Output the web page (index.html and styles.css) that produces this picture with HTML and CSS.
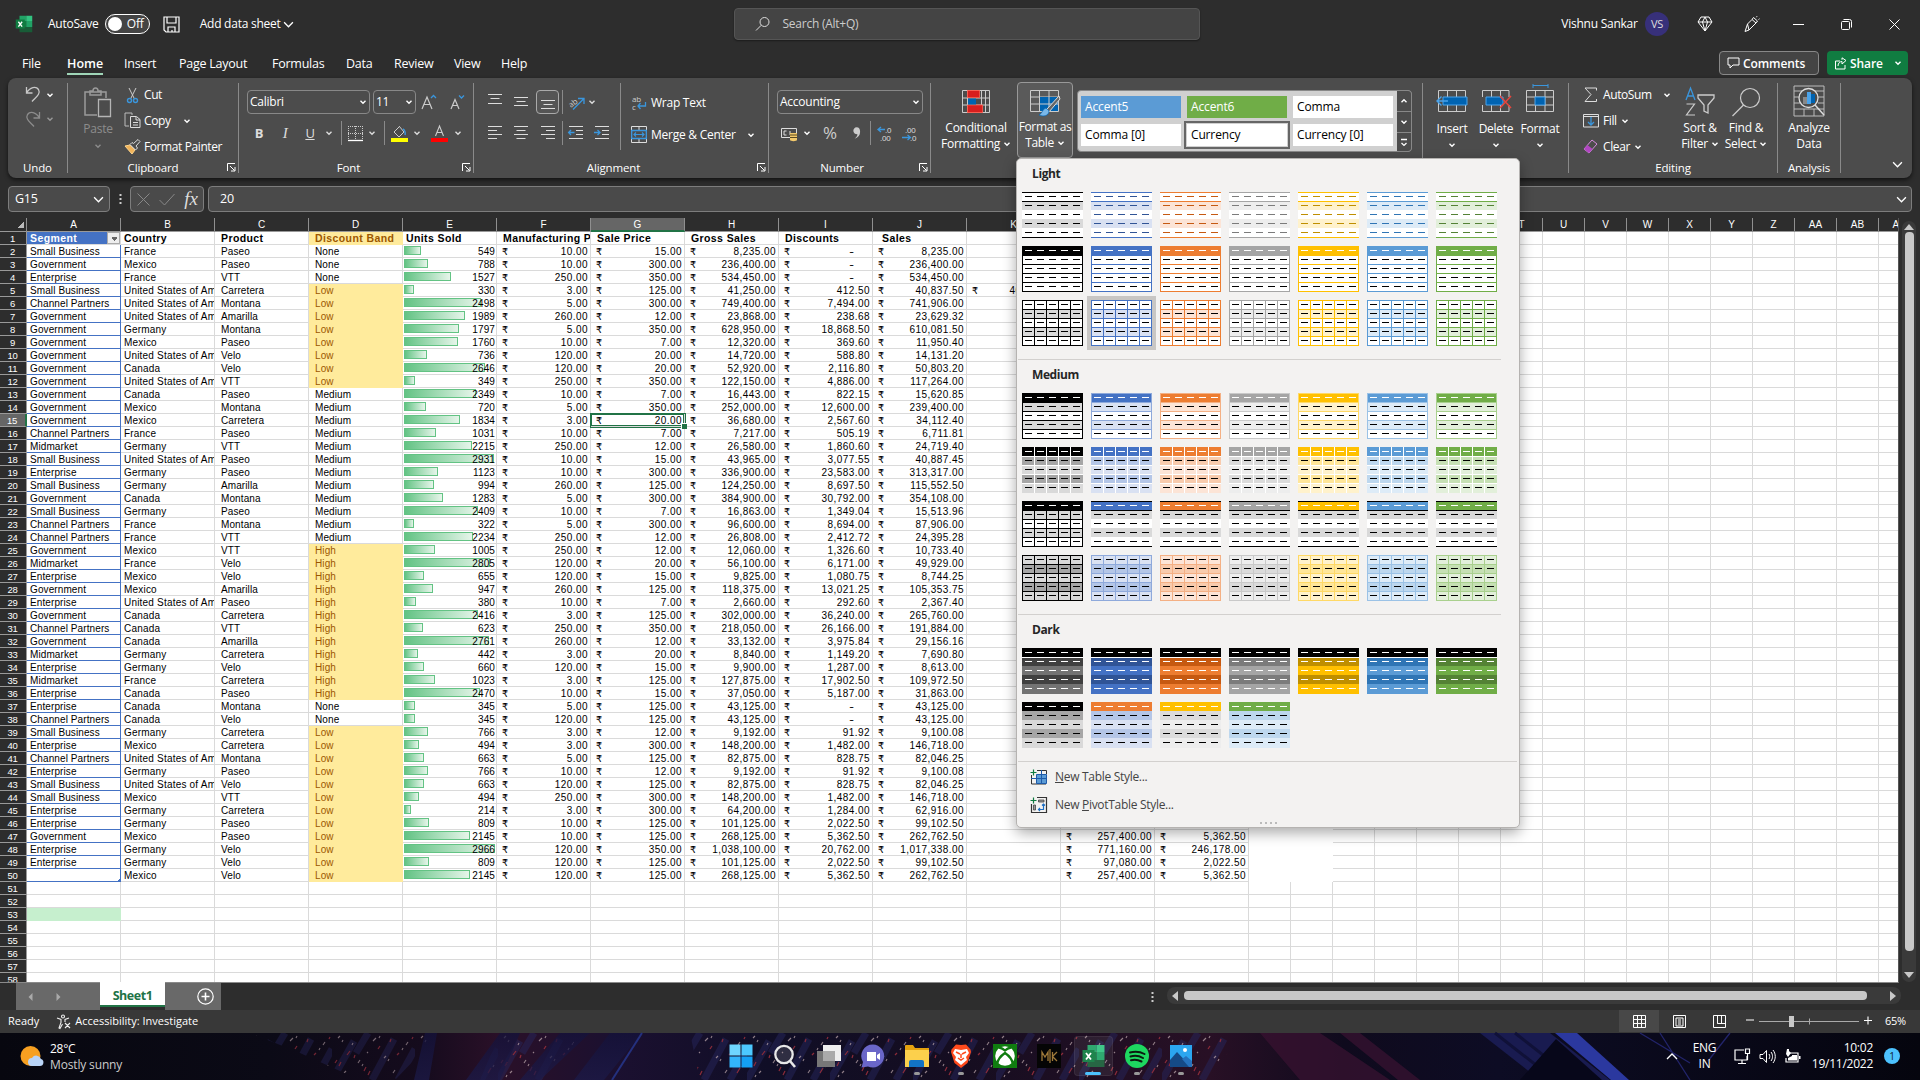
FILE: index.html
```html
<!DOCTYPE html>
<html lang="en">
<head>
<meta charset="utf-8">
<title>Add data sheet - Excel</title>
<link rel="stylesheet" href="styles.css">
</head>
<body>
<svg class="defs" width="0" height="0" aria-hidden="true">
  <symbol id="chev" viewBox="0 0 8 8"><path d="M1.5 2.8 4 5.2 6.5 2.8" fill="none" stroke="currentColor" stroke-width="1.4"/></symbol>
  <symbol id="chevl" viewBox="0 0 10 10"><path d="M1 3 5 7 9 3" fill="none" stroke="currentColor" stroke-width="1.2"/></symbol>
  <symbol id="launch" viewBox="0 0 9 9"><path d="M.5 8V.5H8M3 3l4.5 4.5M8 4v4H4" fill="none" stroke="currentColor"/></symbol>
  <symbol id="excel" viewBox="0 0 24 24"><path d="M6 1h9v7H6z" fill="#21a366"/><path d="M15 1h8v7h-8z" fill="#33c481"/><path d="M6 8h9v8H6z" fill="#107c41"/><path d="M15 8h8v8h-8z" fill="#21a366"/><path d="M6 16h17v7H6z" fill="#185c37"/><path d="M1 6h12v12H1z" fill="#107c41"/><path d="m4.500 9 5 6.500M9.500 9l-5 6.500" stroke="#fff" stroke-width="1.800" fill="none"/></symbol>
  <symbol id="lines-l" viewBox="0 0 16 16"><path d="M1 1.500h14M1 5.500h9M1 9.500h14M1 13.500h9" stroke="currentColor"/></symbol>
  <symbol id="lines-c" viewBox="0 0 16 16"><path d="M1 1.500h14M3.500 5.500h9M1 9.500h14M3.500 13.500h9" stroke="currentColor"/></symbol>
  <symbol id="lines-r" viewBox="0 0 16 16"><path d="M1 1.500h14M6 5.500h9M1 9.500h14M6 13.500h9" stroke="currentColor"/></symbol>
  <symbol id="v3" viewBox="0 0 16 16"><path d="M1 3.500h14M3.500 7.500h9M1 11.500h14" stroke="currentColor"/></symbol>
</svg>

<header class="titlebar">
  <svg class="app-icon" width="18" height="18"><use href="#excel"/></svg>
  <span class="autosave">AutoSave</span>
  <span class="toggle"><i></i>Off</span>
  <svg class="save" width="17" height="17" viewBox="0 0 17 17"><path d="M1 1h15v15H3L1 14zM4 1v6h9V1M5 16v-5h7v5M9 16v-2" fill="none" stroke="#fff" stroke-width="1.200"/></svg>
  <span class="doc">Add data sheet</span>
  <svg class="doc-chev" width="11" height="11"><use href="#chevl"/></svg>
  <div class="search">
    <svg width="16" height="16" viewBox="0 0 16 16"><circle cx="9.500" cy="6" r="4.500" fill="none" stroke="#ddd"/><path d="M6.300 9.200 1 14.500" stroke="#ddd"/></svg>
    <span>Search (Alt+Q)</span>
  </div>
  <span class="user">Vishnu Sankar</span>
  <span class="avatar">VS</span>
  <div class="window-tools">
    <svg width="16" height="16" viewBox="0 0 16 16"><path d="M4 1h8l3 5-7 9-7-9zM1 6h14M5.500 6 8 1l2.500 5L8 15z" fill="none" stroke="#fff"/></svg>
    <svg width="17" height="17" viewBox="0 0 17 17"><path d="M2 15.500 4.500 8 9 3.500l4 3.500L6 14zM9 3.500l1.500-2 4 3.500L13 7M13.500 1.200l.5-1M15.500 3.500l1-.7M4.500 8l1.500 6" fill="none" stroke="#fff"/></svg>
    <svg width="11" height="11" viewBox="0 0 11 11"><path d="M0 5.500h11" stroke="#fff"/></svg>
    <svg width="11" height="11" viewBox="0 0 11 11"><rect x=".5" y="2.500" width="8" height="8" rx="1" fill="none" stroke="#fff"/><path d="M2.500.5h6a2 2 0 0 1 2 2v6" fill="none" stroke="#fff"/></svg>
    <svg width="11" height="11" viewBox="0 0 11 11"><path d="m.5.500 10 10M10.500.500l-10 10" stroke="#fff"/></svg>
  </div>
</header>

<nav class="tabs">
  <a>File</a><a class="active">Home</a><a>Insert</a><a>Page Layout</a><a>Formulas</a><a>Data</a><a>Review</a><a>View</a><a>Help</a>
  <div class="tab-actions">
    <button class="comments"><svg width="13" height="12" viewBox="0 0 13 12"><path d="M1 1h11v7H6l-3 3V8H1z" fill="none" stroke="#fff"/></svg>Comments</button>
    <button class="share"><svg width="13" height="13" viewBox="0 0 13 13"><path d="M6 4H1.500v8H11V8M4 9c0-3 2-4.500 4-4.500V7l4-3.500L8 .8v2" fill="none" stroke="#fff"/></svg>Share<svg class="share-chev" width="8" height="8"><use href="#chev"/></svg></button>
  </div>
</nav>

<section class="ribbon">
  <div class="group g-undo">
    <div class="tools undo-grid">
      <svg width="16" height="17" viewBox="0 0 16 17"><path d="M1.500 1v6h6M1.500 7C5 1 11 0 13.500 3.500 16 8 11 11 7 15.500" fill="none" stroke="#c8c8c8" stroke-width="1.300"/></svg>
      <svg width="8" height="8"><use href="#chev"/></svg>
      <svg width="16" height="17" viewBox="0 0 16 17"><path d="M14.500 1v6h-6M14.500 7C11 1 5 0 2.500 3.500 0 8 5 11 9 15.500" fill="none" stroke="#8c8c8c" stroke-width="1.300"/></svg>
      <svg class="dim" width="8" height="8"><use href="#chev"/></svg>
    </div>
    <div class="glabel">Undo</div>
  </div>
  <div class="group g-clip">
    <div class="tools clip-grid">
      <div class="paste">
        <svg width="28" height="31" viewBox="0 0 28 31"><path d="M13 28H1V5h21v6M6 8V4h3c0-4 5-4 5 0h3v4z" fill="none" stroke="#9a9a9a" stroke-width="1.500"/><path d="M14.500 12.500h12v17h-12z" fill="#4c4c4c" stroke="#b5b5b5" stroke-width="1.300"/></svg>
        <span>Paste</span>
        <svg width="8" height="8"><use href="#chev"/></svg>
      </div>
      <div class="clip-list">
        <div><svg width="17" height="17" viewBox="0 0 17 17"><path d="m5 1 5.500 11M12 1 6.500 12" stroke="#ccc" fill="none"/><circle cx="5.500" cy="13.500" r="2" fill="none" stroke="#3a96dd" stroke-width="1.400"/><circle cx="11.500" cy="13.500" r="2" fill="none" stroke="#3a96dd" stroke-width="1.400"/></svg>Cut</div>
        <div><svg width="17" height="17" viewBox="0 0 17 17"><path d="M5 14H1V1h7v2" fill="none" stroke="#bbb"/><path d="M6.500 4.500h6l3.500 3v8H6.500zM12 5v3h4M9 10.500h5M9 13h5" fill="none" stroke="#ddd"/></svg>Copy<svg class="copy-chev" width="8" height="8"><use href="#chev"/></svg></div>
        <div><svg width="17" height="17" viewBox="0 0 17 17"><path d="m1 8 5-1 5 5-3 4z" fill="#f0b35a" stroke="#ffd58a"/><path d="M6 6.500 11.500 12l2-2-1.500-2 4-4.500-2-2L9.500 5.500 8 4.500z" fill="#4c4c4c" stroke="#ddd"/></svg>Format Painter</div>
      </div>
    </div>
    <div class="glabel">Clipboard<svg width="9" height="9"><use href="#launch"/></svg></div>
  </div>
  <div class="group g-font">
    <div class="tools">
      <div class="font-r1">
        <span class="combo">Calibri<svg width="8" height="8"><use href="#chev"/></svg></span>
        <span class="combo">11<svg width="8" height="8"><use href="#chev"/></svg></span>
        <svg width="16" height="16" viewBox="0 0 16 16"><path d="M1 15 6 3l5 12M3 10.500h6" fill="none" stroke="#ccc" stroke-width="1.200"/><path d="m10 4 2.500-2.500L15 4" fill="none" stroke="#3a96dd" stroke-width="1.300"/></svg>
        <svg width="16" height="16" viewBox="0 0 16 16"><path d="M2 15 6 5.500 10 15M3.600 11.500h5" fill="none" stroke="#ccc" stroke-width="1.200"/><path d="m10 1.500 2.500 2.500L15 1.500" fill="none" stroke="#3a96dd" stroke-width="1.300"/></svg>
      </div>
      <div class="font-r2">
        <b>B</b><i>I</i><u>U</u><svg width="8" height="8"><use href="#chev"/></svg><s class="sep"></s>
        <svg width="17" height="17" viewBox="0 0 17 17"><path d="M1 1.500h15M1 8.500h15M1.500 1v14M8.500 1v14M15.500 1v14" stroke="#ccc" stroke-dasharray="1 1"/><path d="M1 15.500h15" stroke="#fff" stroke-width="1.300"/></svg>
        <svg width="8" height="8"><use href="#chev"/></svg><s class="sep"></s>
        <svg width="17" height="17" viewBox="0 0 17 17"><path d="m8 1 5 6-5 5-5-5 5-5" fill="none" stroke="#ccc"/><path d="M12 4c2 1 2.500 4 2 6" fill="none" stroke="#3a96dd" stroke-width="1.500"/><path d="M0 13h17v4H0z" fill="#ff0"/></svg>
        <svg width="8" height="8"><use href="#chev"/></svg>
        <svg width="17" height="17" viewBox="0 0 17 17"><path d="M4.500 11 8.500 1l4 10M6 7.500h5" fill="none" stroke="#ccc" stroke-width="1.100"/><path d="M0 13h17v4H0z" fill="red"/></svg>
        <svg width="8" height="8"><use href="#chev"/></svg>
      </div>
    </div>
    <div class="glabel off">Font<svg width="9" height="9"><use href="#launch"/></svg></div>
  </div>
  <div class="group g-align">
    <div class="tools align-grid">
      <div class="align-left">
        <div class="align-r1">
          <svg width="16" height="16" viewBox="0 0 16 16"><path d="M1 .5h14M3.500 4.500h9M1 9.500h14" stroke="currentColor"/></svg>
          <svg width="16" height="16"><use href="#v3"/></svg>
          <span class="pressed"><svg width="16" height="16" viewBox="0 0 16 16"><path d="M1 6.500h14M3.500 10.500h9M1 14.500h14" stroke="currentColor"/></svg></span>
          <s class="sep"></s>
          <svg width="17" height="17" viewBox="0 0 17 17"><text x="0" y="11" class="tiny-ab" transform="rotate(-38 6 8)">ab</text><path d="M5 15.500 15.500 5M10 4.500h6V10" fill="none" stroke="#3a96dd" stroke-width="1.300"/></svg>
          <svg class="near" width="8" height="8"><use href="#chev"/></svg>
        </div>
        <div class="align-r1">
          <svg width="16" height="16"><use href="#lines-l"/></svg>
          <svg width="16" height="16"><use href="#lines-c"/></svg>
          <svg width="16" height="16"><use href="#lines-r"/></svg>
          <s class="sep"></s>
          <svg width="16" height="16" viewBox="0 0 16 16"><path d="M1 1.500h14M8 5.500h7M8 9.500h7M1 13.500h14" stroke="#ddd"/><path d="M6.500 7.500h-6M3 5 .6 7.500 3 10" fill="none" stroke="#3a96dd" stroke-width="1.300"/></svg>
          <svg width="16" height="16" viewBox="0 0 16 16"><path d="M1 1.500h14M8 5.500h7M8 9.500h7M1 13.500h14" stroke="#ddd"/><path d="M0 7.500h6M3.500 5 6 7.500 3.500 10" fill="none" stroke="#3a96dd" stroke-width="1.300"/></svg>
        </div>
      </div>
      <div class="align-right">
        <div><svg width="16" height="17" viewBox="0 0 16 17"><text x="1" y="8" class="tiny-ab">ab</text><text x="1" y="16" class="tiny-ab">c</text><path d="M14.500 8v4H7M9.500 9 7 12l2.500 3" fill="none" stroke="#3a96dd" stroke-width="1.300"/></svg>Wrap Text</div>
        <div><svg width="16" height="17" viewBox="0 0 16 17"><path d="M.5.500h15v16H.5zM8 .5v4M8 12.500v4" fill="none" stroke="#ddd"/><path d="M.7 4.500h14.600v8H.7z" fill="#4c4c4c" stroke="#3a96dd" stroke-width="1.300"/><path d="M3 8.500h10M5 6.500l-2 2 2 2M11 6.500l2 2-2 2" fill="none" stroke="#3a96dd" stroke-width="1.200"/></svg>Merge &amp; Center<svg class="merge-chev" width="8" height="8"><use href="#chev"/></svg></div>
      </div>
    </div>
    <div class="glabel off">Alignment<svg width="9" height="9"><use href="#launch"/></svg></div>
  </div>
  <div class="group g-num">
    <div class="tools">
      <div class="num-r1"><span class="combo">Accounting<svg width="8" height="8"><use href="#chev"/></svg></span></div>
      <div class="num-r2">
        <svg width="17" height="17" viewBox="0 0 17 17"><path d="M.5 3.500h15v9H.5zM5.500 6H3v4h2.500M9 6v4" fill="none" stroke="#ddd"/><path d="M9 8h7v7c0 1.500-7 1.500-7 0z" fill="#f3c96b"/><path d="M9 10h7M9 12.500h7" stroke="#5b4a20"/></svg>
        <svg width="8" height="8"><use href="#chev"/></svg>
        <span class="pct">%</span>
        <svg width="9" height="14" viewBox="0 0 10 15"><path d="M5 1c3 0 4 2 4 5 0 4-2 6-6 8 2-2 3-3 3-5-3 0-4.500-2-4.500-4S3 1 5 1z" fill="#ccc"/></svg>
        <s class="sep"></s>
        <svg width="17" height="17" viewBox="0 0 17 17"><text x="8" y="8" class="dec">.0</text><text x="3" y="16" class="dec">.00</text><path d="M8 4.500H1M4 2 1 4.500 4 7" fill="none" stroke="#3a96dd" stroke-width="1.300"/></svg>
        <svg width="17" height="17" viewBox="0 0 17 17"><text x="3" y="8" class="dec">.00</text><text x="8" y="16" class="dec">.0</text><path d="M0 12.500h8M5.500 10l3 2.500-3 2.500" fill="none" stroke="#3a96dd" stroke-width="1.300"/></svg>
      </div>
    </div>
    <div class="glabel off">Number<svg width="9" height="9"><use href="#launch"/></svg></div>
  </div>
  <div class="group g-style">
    <div class="big cond">
      <svg width="28" height="23" viewBox="0 0 28 23"><path d="M.5.500h27v22H.5zM5.500 0v23M19.500 0v23M23.500 0v23M0 8h28M0 15h28" fill="none" stroke="#ccc"/><path d="M5.500.5h12v7h-12zM5.500 15h15v7.500h-15z" fill="#d81e1e" stroke="#ff5a4a" stroke-width=".8"/><path d="M6 8.500h8v6H6z" fill="#0063b1"/></svg>
      <span>Conditional</span><span>Formatting <svg width="8" height="8"><use href="#chev"/></svg></span>
    </div>
    <div class="big fat">
      <svg width="32" height="28" viewBox="0 0 32 28"><path d="M1.500 1.500h28v21h-28zM10.500 1v22M20 1v22M1 8h29M1 15h29" fill="none" stroke="#ccc"/><path d="M11 8h18v14H11z" fill="#0063b1"/><path d="M20 8v14M11 15h18" stroke="#ccc"/><path d="M30 7 18 20l2 3L31 10z" fill="#666" stroke="#ddd"/><path d="M17 19c-4 1-3 5-7 7 4 2 10 1 10-4z" fill="#7ab8ea" stroke="#0063b1" stroke-width=".7"/></svg>
      <span>Format as</span><span>Table <svg width="8" height="8"><use href="#chev"/></svg></span>
    </div>
    <div class="gallery">
      <div class="cells">
        <span class="c5">Accent5</span><span class="c6">Accent6</span><span>Comma</span>
        <span>Comma [0]</span><span class="picked">Currency</span><span>Currency [0]</span>
      </div>
      <div class="gscroll">
        <i><svg class="flip" width="8" height="8"><use href="#chev"/></svg></i>
        <i><svg width="8" height="8"><use href="#chev"/></svg></i>
        <i><svg width="8" height="10" viewBox="0 0 8 10"><path d="M1 1.500h6M1.500 5 4 7.400 6.500 5" fill="none" stroke="#fff" stroke-width="1.300"/></svg></i>
      </div>
    </div>
  </div>
  <div class="group g-cells">
    <div class="big"><svg width="32" height="24" viewBox="0 0 32 24"><path d="M2.500 1.500h27v21h-27zM11.500 1v22M20.500 1v22" fill="none" stroke="#ccc"/><path d="M7 8h24v8H7z" fill="#0063b1" stroke="#4aa3ea"/><path d="M12 12H1M5.500 7.500 1 12l4.500 4.500" fill="none" stroke="#4aa3ea" stroke-width="1.400"/></svg><span>Insert</span><svg width="8" height="8"><use href="#chev"/></svg></div>
    <div class="big"><svg width="32" height="24" viewBox="0 0 32 24"><path d="M29 8V1.500H2.500V8M2.500 16v6.500H29V16M11.500 1v7M20.500 1v7M11.500 16v6M20.500 16v6" fill="none" stroke="#ccc"/><path d="M6 8h17v8H6z" fill="#0063b1" stroke="#4aa3ea"/><path d="m20 7 11 12M31 7 20 19" stroke="#e8453c" stroke-width="1.500"/></svg><span>Delete</span><svg width="8" height="8"><use href="#chev"/></svg></div>
    <div class="big fmt"><svg width="30" height="29" viewBox="0 0 30 29"><path d="M1.500 6.500h27v21h-27zM10.500 6v22M20 6v22M1 13h28M1 21h28" fill="none" stroke="#ccc"/><path d="M10 13h10v8H10z" fill="#0063b1" stroke="#4aa3ea"/><path d="M8 1.500h15M8 0v4M23 0v4" stroke="#3a96dd" fill="none"/></svg><span>Format</span><svg width="8" height="8"><use href="#chev"/></svg></div>
  </div>
  <div class="group g-edit">
    <div class="tools edit-grid">
      <div class="edit-list">
        <div><svg width="16" height="16" viewBox="0 0 16 16"><path d="M13.500 3.500V1H2l6 6.500L2 14.500h11.500V12" fill="none" stroke="#ddd"/></svg>AutoSum<svg class="sum-chev" width="8" height="8"><use href="#chev"/></svg></div>
        <div><svg width="16" height="16" viewBox="0 0 16 16"><path d="M.5 1.500h15v12.500H.5zM.5 3.500h15" fill="none" stroke="#ddd"/><path d="M8 4v8M5 9l3 3 3-3" fill="none" stroke="#3a96dd" stroke-width="1.300"/></svg>Fill<svg width="8" height="8"><use href="#chev"/></svg></div>
        <div><svg width="16" height="16" viewBox="0 0 16 16"><path d="m1 10 8-9 5 4-8 9z" fill="#4c4c4c" stroke="#d78be0"/><path d="m1 10 3.500-4 5 4L6 14z" fill="#b146c2"/></svg>Clear<svg width="8" height="8"><use href="#chev"/></svg></div>
      </div>
      <div class="big"><svg width="30" height="30" viewBox="0 0 30 30"><path d="m1 13 4.500-12L10 13M2.500 9h6" fill="none" stroke="#3a96dd" stroke-width="1.300"/><path d="M1.500 17h8l-8 11H10" fill="none" stroke="#ccc" stroke-width="1.200"/><path d="M13 8h16v3l-6 7v8l-4-2v-6l-6-7z" fill="none" stroke="#ccc" stroke-width="1.300"/></svg><span>Sort &amp;</span><span>Filter <svg width="8" height="8"><use href="#chev"/></svg></span></div>
      <div class="big"><svg width="30" height="30" viewBox="0 0 30 30"><circle cx="19" cy="11" r="9.500" fill="none" stroke="#ccc" stroke-width="1.200"/><path d="m12.500 18-11 11" stroke="#ccc" stroke-width="1.300"/></svg><span>Find &amp;</span><span>Select <svg width="8" height="8"><use href="#chev"/></svg></span></div>
    </div>
    <div class="glabel">Editing</div>
  </div>
  <div class="group g-ana">
    <div class="tools"><div class="big ana"><svg width="32" height="32" viewBox="0 0 32 32"><path d="M1 1h30v30H1zM1 6h30M1 12h6M25 12h6M1 18h6M25 18h6M1 24h30M11 24v7M21 24v7" fill="none" stroke="#bbb"/><circle cx="15.500" cy="13" r="9.500" fill="#4c4c4c" stroke="#ddd" stroke-width="1.300"/><path d="m22 20 9 10" stroke="#ddd" stroke-width="1.500"/><path d="M10 12h4v7h-4z" fill="#888"/><path d="M14 7h4v12h-4z" fill="#4aa3ea"/><path d="M18 9h4v9h-4z" fill="#0063b1"/></svg><span>Analyze</span><span>Data</span></div></div>
    <div class="glabel">Analysis</div>
  </div>
  <svg class="collapse" width="11" height="11"><use href="#chevl"/></svg>
</section>

<section class="formula">
  <div class="namebox">G15<svg width="11" height="11"><use href="#chevl"/></svg></div>
  <svg class="fdots" width="3" height="12" viewBox="0 0 3 12"><path d="M.5 1h2v2h-2zM.5 5h2v2h-2zM.5 9h2v2h-2z" fill="#ccc"/></svg>
  <div class="fx">
    <svg width="13" height="13" viewBox="0 0 13 13"><path d="m.5.500 12 12M12.500.500l-12 12" stroke="#888"/></svg>
    <svg width="16" height="13" viewBox="0 0 16 13"><path d="m.5 7 5 5 10-11" fill="none" stroke="#888"/></svg>
    <em>fx</em>
  </div>
  <div class="fval">20<svg width="11" height="11"><use href="#chevl"/></svg></div>
</section>

<main class="sheet-area">
  <div class="sheet" id="sheet"></div>
  <div class="vscroll">
    <svg width="12" height="8" viewBox="0 0 12 8"><path d="M6 1 11 7H1z" fill="#c8c8c8"/></svg>
    <i></i>
    <svg width="12" height="8" viewBox="0 0 12 8"><path d="M6 7 11 1H1z" fill="#c8c8c8"/></svg>
  </div>
</main>

<footer class="sheetbar">
  <div class="nav"><svg width="5" height="8" viewBox="0 0 5 8"><path d="M4.500 0v8L.5 4z" fill="#aaa"/></svg><svg width="5" height="8" viewBox="0 0 5 8"><path d="M.5 0v8l4-4z" fill="#aaa"/></svg></div>
  <div class="tab">Sheet1</div>
  <div class="add"><svg width="17" height="17" viewBox="0 0 17 17"><circle cx="8.500" cy="8.500" r="7.700" fill="none" stroke="#fff" stroke-width="1.200"/><path d="M8.500 4.500v8M4.500 8.500h8" stroke="#fff" stroke-width="1.600"/></svg></div>
  <svg class="hdots" width="3" height="12" viewBox="0 0 3 12"><path d="M.5 1h2v2h-2zM.5 5h2v2h-2zM.5 9h2v2h-2z" fill="#ccc"/></svg>
  <div class="hscroll"><svg width="8" height="10" viewBox="0 0 8 10"><path d="M7 0v10L1 5z" fill="#c8c8c8"/></svg><i></i><svg width="8" height="10" viewBox="0 0 8 10"><path d="M1 0v10l6-5z" fill="#c8c8c8"/></svg></div>
</footer>
<div class="status">
  <span>Ready</span>
  <svg width="15" height="15" viewBox="0 0 15 15"><path d="M5.500 2.500a1.500 1.500 0 1 1 3 0 1.500 1.500 0 1 1-3 0M1 4l4 1.500v3L3 14l1 .5L6.500 10M13 4 9 5.500V8M9 9l5 5M14 9l-5 5" fill="none" stroke="#eee" stroke-width="1.100"/></svg>
  <span>Accessibility: Investigate</span>
  <div class="views">
    <span class="on"><svg width="13" height="13" viewBox="0 0 13 13"><path d="M.5.500h12v12H.5zM.5 4.500h12M.5 8.500h12M4.500.5v12M8.500.5v12" fill="none" stroke="#fff"/></svg></span>
    <span><svg width="13" height="13" viewBox="0 0 13 13"><path d="M.5.500h12v12H.5zM3 3h7v8H3zM5 5h3M5 7h3M5 9h3" fill="none" stroke="#fff"/></svg></span>
    <span><svg width="13" height="13" viewBox="0 0 13 13"><path d="M.5.500h12v12H.5zM4.500.5v8h4v-8M4.500 8.500h8" fill="none" stroke="#fff"/></svg></span>
  </div>
  <svg class="zoomer" width="126" height="12" viewBox="0 0 126 12"><path d="M0 5h8M118 5.500h8M122 1.500v8" stroke="#fff" stroke-width="1.100"/><path d="M13 6.500h100" stroke="#aaa"/><path d="M63.500 3.500v6" stroke="#aaa"/><path d="M43 1h5v11h-5z" fill="#c8c8c8"/></svg>
  <span class="pctz">65%</span>
</div>

<footer class="taskbar">
  <svg class="wall" width="1920" height="47" viewBox="0 0 1920 47" preserveAspectRatio="none">
    <defs>
      <linearGradient id="w1"><stop offset="0" stop-color="#07070f"/><stop offset=".14" stop-color="#0b0a16"/><stop offset=".22" stop-color="#150b1d"/><stop offset=".26" stop-color="#2a1028"/><stop offset=".32" stop-color="#1b1030"/><stop offset=".4" stop-color="#100e26"/><stop offset=".5" stop-color="#150d20"/><stop offset=".63" stop-color="#281025"/><stop offset=".7" stop-color="#0f0a1d"/><stop offset=".78" stop-color="#0d0c24"/><stop offset="1" stop-color="#05050e"/></linearGradient>
      <linearGradient id="w2" x1="0" y1="1" x2="0" y2="0"><stop offset="0" stop-color="#1c1a48"/><stop offset="1" stop-color="#14123a"/></linearGradient>
      <pattern id="w3" width="83" height="47" patternUnits="userSpaceOnUse"><path d="M0 47 22 8M40 47 62 6M24 20 36 0M66 47 83 16" stroke="#25255c" stroke-width="7" opacity=".5"/><path d="M6 5l2-2M10 9l1-2M20 12l1-2M26 30l2-3M30 33l1-2M41 8l3-3M47 5l1-2M52 25l2-2M56 28l1-2M61 40l2-3M12 40l2-2M8 44l1-2M35 20l1-1M74 12l2-3M70 17l1-2M78 34l1-2" stroke="#b9a3a8" stroke-width="1.100" opacity=".75"/><path d="M15 22l3-4M32 38l2-4M36 42l2-4M46 16l2-3M58 9l1-3M3 30l2-3M7 33l2-4M65 22l2-2M73 40l3-5M80 6l1-2M22 25l1-3" stroke="#8c2a38" stroke-width="1.200"/></pattern>
    </defs>
    <path d="M0 0h1920v47H0z" fill="url(#w1)"/>
    <path d="M250 0h190L395 47h-35L300 20z" fill="url(#w3)" opacity=".8"/><path d="M500 0h80l-30 47h-70zM690 0h550l-30 47H700z" fill="url(#w3)"/>
    <path d="M425 0h12l-8 47h-15zM500 0h20l-20 47h-34zM560 0h30l-50 47h-20zM610 0h32l-38 47h-30z" fill="url(#w2)" opacity=".75"/>
    <path d="M642 0 612 47" stroke="#24307e" stroke-width="2"/>
    <path d="M1260 0h60l70 47h-90zM1340 0h20l60 47h-22z" fill="#3a1232" opacity=".7"/>
    <path d="M1480 0h70l60 47h-70z" fill="#191b50"/><path d="M1495 0l60 47M1515 0l60 47" stroke="#101138" stroke-width="3"/>
    <path d="m1555 0 22 0 52 47h-18z" fill="#2b389f"/><path d="m1556 6 46 41h-82z" fill="#07071a"/>
    <path d="M1640 0l50 30M1730 0l-22 28M1660 0l30 47" stroke="#22246a" stroke-width="1.300"/>
  </svg>
  <div class="weather">
    <svg width="24" height="24" viewBox="0 0 24 24"><circle cx="10.500" cy="11" r="10" fill="#f7a021"/><path d="M12 21a4 4 0 0 1 0-8 5 5 0 0 1 9 1 3.600 3.600 0 0 1-1 7z" fill="#b9d4f7"/></svg>
    <div><b>28°C</b><span>Mostly sunny</span></div>
  </div>
  <div class="apps">
    <span><svg width="24" height="24" viewBox="0 0 24 24"><path d="M.5.500h11v11H.5z" fill="#6fd6ff"/><path d="M12.500.500h11v11h-11z" fill="#4cc8ff"/><path d="M.5 12.500h11v11H.5z" fill="#33b5fb"/><path d="M12.500 12.500h11v11h-11z" fill="#14a0f5"/></svg></span>
    <span><svg width="24" height="24" viewBox="0 0 24 24"><circle cx="11" cy="10.500" r="8.700" fill="#fff2" stroke="#e8e8e8" stroke-width="2.300"/><path d="m17 17 5 6" stroke="#e8e8e8" stroke-width="2.600"/></svg></span>
    <span><svg width="26" height="24" viewBox="0 0 26 24"><path d="M7 1h18v16H7z" fill="#eee"/><path d="M1 7h18v16H1z" fill="#777"/><path d="M7 7h12v10H7z" fill="#aaa"/></svg></span>
    <span><svg width="24" height="24" viewBox="0 0 24 24"><path d="M12 .5a11.500 11.500 0 1 1-5 22L.5 23.500 2 18A11.500 11.500 0 0 1 12 .500z" fill="#6a66c8"/><path d="M6 8h9v9H6zM16 11l3-2v7l-3-2z" fill="#fff"/></svg></span>
    <span class="run"><svg width="26" height="24" viewBox="0 0 26 24"><path d="M1 2q0-1 1-1h7l2 3h14v6H1z" fill="#e5a20f"/><path d="M1 6h24v17H1z" fill="#fcd04c"/><path d="M5 23v-5q0-2 2-2h11q2 0 2 2v5z" fill="#1273c4"/></svg></span>
    <span class="run"><svg width="22" height="24" viewBox="0 0 22 24"><path d="m6 .5 5 .5 5-.5 4.500 5L21 8l-3.500 11L11 24l-6.500-5L1 8l.5-2.500z" fill="#ff4a1c"/><path d="m5 5 6 1 6-1 2 4-3 4 1 3-6 5-6-5 1-3-3-4z" fill="#fff"/><path d="m6 8 4 2M16 8l-4 2M11 10v4M8 14l3 2 3-2" stroke="#ff4a1c" stroke-width="1.500" fill="none"/></svg></span>
    <span><svg width="24" height="24" viewBox="0 0 24 24"><path d="M0 0h24v24H0z" fill="#107c10"/><circle cx="12" cy="12" r="9.800" fill="#fff"/><path d="M4 20c1-5 5-9 8-11 3 2 7 6 8 11M6 3.500C9 4 11 5.500 12 6.500c1-1 3-2.500 6-3" stroke="#107c10" stroke-width="2.400" fill="none"/></svg></span>
    <span><svg width="24" height="24" viewBox="0 0 24 24"><path d="M0 0h24v24H0z" fill="#050505"/><path d="M5 17V8l3 5 3-5v9M13 5v14M15.500 8v9M20 8l-4.500 4.500L20 17" stroke="#a07a3a" stroke-width="1.300" fill="none"/></svg></span>
    <span class="run cur"><svg width="25" height="24" viewBox="0 0 24 24"><use href="#excel"/></svg></span>
    <span class="run"><svg width="24" height="24" viewBox="0 0 24 24"><circle cx="12" cy="12" r="12" fill="#1ed760"/><path d="M5 8.500c5-1.500 10-1 14.500 1.500M5.500 12.500c4.500-1.300 8.500-.8 12.500 1.500M6 16.300c4-1 7-.6 10.500 1.200" stroke="#0b1a10" stroke-width="2" fill="none" stroke-linecap="round"/></svg></span>
    <span class="run"><svg width="22" height="22" viewBox="0 0 22 22"><path d="M0 0h22v22H0z" fill="#2ba6f0"/><path d="m0 15 7-8 14 15H0z" fill="#154a86"/><path d="m12 14 4-3 6 5v6h-3z" fill="#2572bd"/><circle cx="15" cy="5" r="2" fill="#fff"/></svg></span>
  </div>
  <div class="tray">
    <svg class="tray-up" width="12" height="8" viewBox="0 0 12 8"><path d="m1 7 5-5 5 5" fill="none" stroke="#fff" stroke-width="1.300"/></svg>
    <div class="lang"><span>ENG</span><span>IN</span></div>
    <svg width="17" height="17" viewBox="0 0 17 17"><path d="M10 2H1v10h12V8M4 15.500h8M8 12v3M11.500 1h4v4.500h-4zM13.500 6v6" fill="none" stroke="#fff" stroke-width="1.200"/></svg>
    <svg width="17" height="15" viewBox="0 0 17 15"><path d="M1 5.500h3l3.500-4v12l-3.500-4H1zM10 5c1 1.500 1 3.500 0 5M12 3c2 2.500 2 6.500 0 9M14 1c3 4 3 9 0 13" fill="none" stroke="#fff"/></svg>
    <svg width="17" height="15" viewBox="0 0 17 15"><path d="M6 4h8v9H2V9" fill="none" stroke="#fff" stroke-width="1.200"/><path d="M8 6h5v5.500H4V9l4-2zM15 7h1.500v3H15zM3 0h2v2l2 2-3 4-2-3z" fill="#fff"/></svg>
    <div class="clock"><span>10:02</span><span>19/11/2022</span></div>
    <span class="badge">1</span>
  </div>
</footer>

<div class="popup">
  <h3>Light</h3>
  <div class="swatches" id="light"></div>
  <hr>
  <h3>Medium</h3>
  <div class="swatches" id="medium"></div>
  <hr>
  <h3>Dark</h3>
  <div class="swatches" id="dark"></div>
  <hr class="wide">
  <div class="item"><svg width="17" height="16" viewBox="0 0 17 16"><path d="M7 1.500h9.500V5M1.500 6v9H16" fill="none" stroke="#333"/><path d="M6.500 5.500h10v9h-10z" fill="#5b9bd5" stroke="#1e5aa8"/><path d="M6.500 9.500h10M11.500 1v14M1 9.500h5" stroke="#1e5aa8" fill="none"/><path d="M.5 3.500h6M3.500.5v6" stroke="#107c41" stroke-width="1.200"/></svg><span><u>N</u>ew Table Style...</span></div>
  <div class="item"><svg width="17" height="16" viewBox="0 0 17 16"><path d="M7 .5h9.500v15h-15V7" fill="none" stroke="#333" stroke-width="1.200"/><path d="M8.500 3h5.500v2H8.500zM3.500 8h2v5h-2z" fill="#999" stroke="#444" stroke-width=".8"/><path d="M13.500 7.500v5H9M12 8.500l1.500-1.500L15 8.500M10 11l-1.500 1.500L10 14" fill="none" stroke="#1e6fc4" stroke-width="1.200"/><path d="M.5 3.500h6M3.500.5v6" stroke="#107c41" stroke-width="1.200"/></svg><span>New <u>P</u>ivotTable Style...</span></div>
  <div class="grip"><i></i><i></i><i></i><i></i></div>
</div>
<script src="script.js"></script>
</body>
</html>
```
FILE: script.js
```js
const SEG = { S: 'Small Business', G: 'Government', E: 'Enterprise', C: 'Channel Partners', M: 'Midmarket', '': '' };
const CTY = { F: 'France', M: 'Mexico', U: 'United States of Am', G: 'Germany', C: 'Canada' };

// segment | country | product | band | units | manufacturing price | sale price | gross | discount | sales
const DATA = `S|F|Paseo|None|549|10|15|8235|0|8235
G|M|Paseo|None|788|10|300|236400|0|236400
E|F|VTT|None|1527|250|350|534450|0|534450
S|U|Carretera|Low|330|3|125|41250|412.5|40837.5
C|U|Montana|Low|2498|5|300|749400|7494|741906
G|U|Amarilla|Low|1989|260|12|23868|238.68|23629.32
G|G|Montana|Low|1797|5|350|628950|18868.5|610081.5
G|M|Paseo|Low|1760|10|7|12320|369.6|11950.4
G|U|Velo|Low|736|120|20|14720|588.8|14131.2
G|C|Velo|Low|2646|120|20|52920|2116.8|50803.2
G|U|VTT|Low|349|250|350|122150|4886|117264
G|C|Paseo|Medium|2349|10|7|16443|822.15|15620.85
G|M|Montana|Medium|720|5|350|252000|12600|239400
G|M|Carretera|Medium|1834|3|20|36680|2567.6|34112.4
C|F|Paseo|Medium|1031|10|7|7217|505.19|6711.81
M|G|VTT|Medium|2215|250|12|26580|1860.6|24719.4
S|U|Paseo|Medium|2931|10|15|43965|3077.55|40887.45
E|G|Paseo|Medium|1123|10|300|336900|23583|313317
S|G|Amarilla|Medium|994|260|125|124250|8697.5|115552.5
G|C|Montana|Medium|1283|5|300|384900|30792|354108
S|G|Paseo|Medium|2409|10|7|16863|1349.04|15513.96
C|F|Montana|Medium|322|5|300|96600|8694|87906
C|F|VTT|Medium|2234|250|12|26808|2412.72|24395.28
G|M|VTT|High|1005|250|12|12060|1326.6|10733.4
M|F|Velo|High|2805|120|20|56100|6171|49929
E|M|Velo|High|655|120|15|9825|1080.75|8744.25
G|M|Amarilla|High|947|260|125|118375|13021.25|105353.75
E|U|Paseo|High|380|10|7|2660|292.6|2367.4
G|C|Carretera|High|2416|3|125|302000|36240|265760
C|C|VTT|High|623|250|350|218050|26166|191884
G|C|Amarilla|High|2761|260|12|33132|3975.84|29156.16
M|G|Carretera|High|442|3|20|8840|1149.2|7690.8
E|G|Velo|High|660|120|15|9900|1287|8613
M|F|Carretera|High|1023|3|125|127875|17902.5|109972.5
E|C|Paseo|High|2470|10|15|37050|5187|31863
E|C|Montana|None|345|5|125|43125|0|43125
C|C|Velo|None|345|120|125|43125|0|43125
S|G|Carretera|Low|766|3|12|9192|91.92|9100.08
E|M|Carretera|Low|494|3|300|148200|1482|146718
C|U|Montana|Low|663|5|125|82875|828.75|82046.25
E|G|Paseo|Low|766|10|12|9192|91.92|9100.08
S|U|Velo|Low|663|120|125|82875|828.75|82046.25
S|M|VTT|Low|494|250|300|148200|1482|146718
E|G|Carretera|Low|214|3|300|64200|1284|62916
E|G|Paseo|Low|809|10|125|101125|2022.5|99102.5
G|M|Paseo|Low|2145|10|125|268125|5362.5|262762.5
E|G|Velo|Low|2966|120|350|1038100|20762|1017338
E|G|Velo|Low|809|120|125|101125|2022.5|99102.5
|M|Velo|Low|2145|120|125|268125|5362.5|262762.5`.split('\n').map(r => r.split('|'));

const EXTRA = { 5: { K: 40837.5 }, 47: { L: 257400, M: 5362.5 }, 48: { L: 771160, M: 246178 }, 49: { L: 97080, M: 2022.5 }, 50: { L: 257400, M: 5362.5 } };
const COLS = [...'ABCDEFGHIJKLMNOPQRSTUVWXYZ', 'AA', 'AB', 'AC'];
const HEAD = ['Segment', 'Country', 'Product', 'Discount Band', 'Units Sold', 'Manufacturing P', 'Sale Price', 'Gross Sales', 'Discounts', 'Sales'];

const money = v => `<i>₹</i><span${+v ? '' : ' class="dash"'}>${+v ? (+v).toLocaleString('en-US', { minimumFractionDigits: 2 }) : '-'}</span>`;

function cell(row, c) {
  const name = COLS[c];
  const cls = ['c', 'col-' + name];
  let html = '';
  if (row === 1 && c < 10) {
    cls.push('h');
    html = HEAD[c] + (c === 0 ? '<b class="filter"></b>' : '');
    if (c === 3) cls.push('amber');
  } else if (row <= 50 && c < 10) {
    const d = DATA[row - 2];
    if (c === 0) { html = SEG[d[0]]; cls.push('blue'); if (row === 50) cls.push('corner'); }
    else if (c === 1) html = CTY[d[1]];
    else if (c === 2) html = d[2];
    else if (c === 3) { html = d[3]; if (d[3] === 'Low' || d[3] === 'High') cls.push('amber'); }
    else if (c === 4) html = `<b class="bar" style="width:${Math.round(d[4] * 91 / 2966)}px"></b><span>${d[4]}</span>`;
    else { html = money(d[c]); cls.push('m'); }
  }
  if (EXTRA[row] && EXTRA[row][name]) { html = money(EXTRA[row][name]); cls.push('m'); }
  if (row === 15 && name === 'G') cls.push('selected');
  if (row === 53 && c === 0) cls.push('green');
  if (row <= 50 && (name === 'N' || name === 'O')) cls.push('blank');
  return `<div class="${cls.join(' ')}">${html}</div>`;
}

let out = '<div class="r head"><div class="corner-cell"></div>' + COLS.map(n => `<div${n === 'G' ? ' class="on"' : ''}>${n}</div>`).join('') + '</div>';
for (let r = 1; r <= 58; r++) {
  out += `<div class="r"><div class="rn${r === 15 ? ' on' : ''}">${r}</div>` + COLS.map((_, c) => cell(r, c)).join('') + '</div>';
}
document.getElementById('sheet').innerHTML = out;

// base, dark, light, tint, mid
const P = [
  ['#000', '#000', '#d9d9d9', '#a6a6a6', '#000'],
  ['#4472c4', '#305496', '#d9e1f2', '#b4c6e7', '#8ea9db'],
  ['#ed7d31', '#c65911', '#fce4d6', '#f8cbad', '#f4b084'],
  ['#a5a5a5', '#7b7b7b', '#ededed', '#dbdbdb', '#c9c9c9'],
  ['#ffc000', '#bf8f00', '#fff2cc', '#ffe699', '#ffd966'],
  ['#5b9bd5', '#2f75b5', '#ddebf7', '#bdd7ee', '#9bc2e6'],
  ['#70ad47', '#548235', '#e2efda', '#c6e0b4', '#a9d08e']
];

// rows: five fills; hs: horizontal line positions; grid: draw verticals; head/dash: dash colours
function swatch({ rows, line, hs = [], grid, sides, head, dash, extra = '' }) {
  let s = rows.map((f, i) => `<rect y="${i * 9}" width="61" height="${i === 4 ? 10 : 9}" fill="${f}"/>`).join('');
  s += hs.map(y => `<rect y="${y}" width="61" height="1" fill="${line}"/>`).join('');
  const vs = grid === 'inner' ? [12, 24, 36, 48] : grid ? [0, 12, 24, 36, 48, 60] : sides ? [0, 60] : [];
  s += vs.map(x => `<rect x="${x}" width="1" height="46" fill="${line}"/>`).join('') + extra;
  for (let i = 0; i < 5; i++) for (let j = 0; j < 5; j++)
    s += `<rect x="${3 + j * 12}" y="${4 + i * 9}" width="7" height="1" fill="${i ? dash : head}"/>`;
  return `<svg width="61" height="46" viewBox="0 0 61 46" shape-rendering="crispEdges">${s}</svg>`;
}
const W = '#fff', K = '#000', ALL = [0, 9, 18, 27, 36, 45];
const STYLES = {
  l1: p => swatch({ rows: [W, p[2], W, p[2], W], line: p[0], hs: [0, 9, 45], head: p[1], dash: p[1] }),
  l2: p => swatch({ rows: [p[0], W, W, W, W], line: p[0], hs: ALL, sides: 1, head: W, dash: K }),
  l3: p => swatch({ rows: [W, p[2], W, p[2], W], line: p[0], hs: ALL, grid: 1, head: K, dash: K }),
  m1: p => swatch({ rows: [p[0], p[2], W, p[2], W], line: p[4], hs: ALL, sides: 1, head: W, dash: K }),
  m2: p => swatch({ rows: [p[0], p[3], p[2], p[3], p[2]], line: W, hs: [9, 18, 27, 36], grid: 'inner', head: W, dash: K }),
  m3: (p, i) => swatch({ rows: [p[0], '#d9d9d9', W, '#d9d9d9', W], line: K, hs: i ? [0, 9, 45] : ALL, grid: i ? 0 : 1, head: W, dash: K, extra: i ? '' : '<rect width="61" height="9"/>' }),
  m4: p => swatch({ rows: [p[2], p[3], p[2], p[3], p[2]], line: p[4], hs: ALL, grid: 1, head: K, dash: K }),
  d1: (p, i) => { const a = i ? p[1] : '#404040', b = i ? p[0] : '#737373'; return swatch({ rows: [K, a, b, a, b], line: W, hs: [9], head: W, dash: W }); },
  d2: (p, h) => swatch({ rows: [h, p[3], p[2], p[3], p[2]], head: W, dash: K })
};
const fill = (id, names) => {
  document.getElementById(id).innerHTML = names.map(n => P.map((p, i) => `<span class="sw${n === 'l3' && i === 1 ? ' hover' : ''}">${STYLES[n](p, i)}</span>`).join('')).join('');
};
fill('light', ['l1', 'l2', 'l3']);
fill('medium', ['m1', 'm2', 'm3', 'm4']);
fill('dark', ['d1']);
document.getElementById('dark').innerHTML += [[0, '#000'], [1, '#ed7d31'], [3, '#ffc000'], [5, '#70ad47']].map(([i, h]) => `<span class="sw">${STYLES.d2(P[i], h)}</span>`).join('');
```
FILE: styles.css
```css
* { box-sizing: border-box; }
body {
  margin: 0; width: 1920px; height: 1080px; overflow: hidden; position: relative;
  background: #2d2d2d; color: #fff;
  font: 12px/16px "Open Sans", "Noto Sans", sans-serif; letter-spacing: -0.25px;
  display: flex; flex-direction: column;
}
svg { display: block; flex: none; overflow: visible; }
.defs { position: absolute; }
span, a { white-space: nowrap; }

/* title bar */
.titlebar { height: 48px; flex: none; display: flex; align-items: center; }
.app-icon { margin-left: 15px; }
.autosave { margin-left: 15px; width: 57px; }
.toggle { width: 45px; height: 20px; border: 1px solid #fff; border-radius: 10px; background: #444; display: flex; align-items: center; gap: 5px; padding-left: 2px; line-height: 16px; }
.toggle i { width: 14px; height: 14px; border-radius: 50%; background: #fff; }
.save { margin-left: 13px; }
.doc { margin-left: 20px; width: 83px; }
.search { margin-left: 440px; width: 468px; height: 32px; border: 1px solid #555; border-radius: 4px; background: #444; display: flex; align-items: center; gap: 12px; padding-left: 20px; color: #ccc; box-shadow: 0 1px 2px #0006; }
.user { margin-left: 361px; width: 84px; }
.avatar { width: 24px; height: 24px; border-radius: 50%; background: #37307a; color: #ddd; font-size: 11px; line-height: 24px; text-align: center; }
.window-tools { display: grid; grid-template-columns: 50px 42px 52px 44px 52px; margin-left: 11px; justify-items: center; align-items: center; }

/* tabs */
.tabs { height: 30px; flex: none; display: grid; grid-template-columns: 45px 57px 55px 93px 74px 48px 60px 47px 1fr 201px; padding-left: 22px; }
.tabs a { height: 27px; line-height: 32px; font-size: 12.500px; justify-self: start; }
.tabs .active { font-weight: 600; border-bottom: 2px solid #9fd5b7; letter-spacing: 0; }
.tab-actions { display: flex; gap: 8px; padding-top: 3px; }
button { height: 24px; color: #fff; font: 600 12px "Open Sans", sans-serif; letter-spacing: -.1px; border-radius: 4px; display: flex; align-items: center; padding: 0 0 0 7px; gap: 3px; }
.comments { width: 100px; background: #444; border: 1px solid #888; }
.share { width: 81px; background: #107c41; border: 0; }
.share-chev { margin-left: 8px; }

/* ribbon */
.ribbon { height: 100px; flex: none; margin: 0 8px; width: 1904px; background: #4c4c4c; border-radius: 8px; display: flex; box-shadow: 0 2px 4px #0009; }
.group { height: 90px; margin-top: 5px; border-right: 1px solid #8a8a8a; display: flex; flex-direction: column; }
.tools { height: 76px; flex: none; }
.glabel { position: relative; text-align: center; line-height: 18px; height: 16px; font-size: 11.500px; letter-spacing: -.15px; }
.glabel.off { padding-right: 15px; }
.glabel svg { position: absolute; right: 2px; top: 4px; }
.sep { width: 1px; height: 24px; background: #8a8a8a; }
.g-undo { width: 60px; } .g-clip { width: 171px; } .g-font { width: 235px; } .g-align { width: 295px; } .g-num { width: 162px; }
.g-style { width: 492px; flex-direction: row; } .g-cells { width: 146px; flex-direction: row; } .g-edit { width: 209px; } .g-ana { width: 63px; }
.undo-grid { display: grid; grid-template-columns: 20px 10px; grid-template-rows: 23px 26px; align-items: center; padding: 0 0 0 17px; column-gap: 1px; }
.dim { color: #999; }
.clip-grid { display: flex; }
.paste { width: 57px; display: flex; flex-direction: column; align-items: center; color: #8c8c8c; padding: 4px 0 0 3px; }
.paste span { margin: 3px 0 5px; }
.clip-list { display: grid; grid-template-rows: 24px 27px 25px; margin-left: -1px; letter-spacing: -.4px; }
.clip-list div, .edit-list div { display: flex; align-items: center; gap: 3px; white-space: nowrap; }
.clip-list .copy-chev { margin-left: 9px; }
.combo { height: 24px; border: 1px solid #888; border-radius: 4px; display: flex; align-items: center; justify-content: space-between; padding: 0 2px; }
.font-r1 { display: grid; grid-template-columns: 123px 43px 16px 16px; column-gap: 3px; padding: 7px 0 0 8px; align-items: center; }
.font-r1 > svg:nth-of-type(1) { margin-left: 2px; } .font-r1 > svg:nth-of-type(2) { margin-left: 11px; }
.font-r2 { display: grid; grid-template-columns: 26px 26px 24px 14px 10px 18px 16px 8px 22px 14px 30px 8px; height: 24px; margin-top: 7px; padding-left: 7px; align-items: center; justify-items: center; font-size: 13px; color: #ddd; }
.font-r2 i { font-family: "Liberation Serif", serif; font-size: 15px; }
.align-grid { display: flex; }
.align-left { width: 147px; height: 67px; border-right: 1px solid #8a8a8a; padding-top: 7px; }
.align-r1 { display: grid; grid-template-columns: 26px 26px 27px 3px 24px 28px; height: 24px; margin-bottom: 7px; align-items: center; justify-items: center; padding-left: 8px; color: #ddd; }
.near { justify-self: start; }
.pressed { width: 23px; height: 24px; border: 1px solid #aaa; border-radius: 4px; background: #555; display: grid; place-items: center; }
.align-right { padding: 11px 0 0 10px; }
.align-right div { display: flex; align-items: center; gap: 4px; height: 17px; margin-bottom: 15px; }
.merge-chev { margin-left: 7px; }
.tiny-ab { font: 8px "Open Sans", sans-serif; fill: #ccc; }
.dec { font: 8px "Liberation Sans", sans-serif; fill: #ddd; }
.num-r1 { padding: 7px 0 0 8px; width: 154px; }
.num-r2 { display: grid; grid-template-columns: 24px 12px 34px 18px 10px 20px 31px; height: 24px; margin: 7px 0 0 8px; align-items: center; justify-items: center; }
.pct { font-size: 17px; color: #ccc; }
.big { display: flex; flex-direction: column; align-items: center; }
.big > span { line-height: 16px; display: flex; align-items: center; gap: 3px; }
.cond { width: 86px; padding: 7px 0 0 4px; } .cond > svg { margin-bottom: 7px; }
.fat { width: 56px; height: 76px; margin-top: -1px; background: #5a5a5a; border: 1px solid #999; border-radius: 4px; padding-top: 6px; letter-spacing: -.35px; } .fat > svg { margin-bottom: 2px; }
.gallery { margin: 7px 0 0 4px; width: 335px; height: 62px; border-radius: 4px; background: #d0d0d0; border: 1px solid #888; display: flex; overflow: hidden; }
.cells { display: grid; grid-template-columns: repeat(3, 100px); grid-template-rows: 22px 22px; gap: 6px; padding: 5px 0 0 3px; width: 320px; color: #000; }
.cells span { background: #fff; padding-left: 4px; line-height: 21px; letter-spacing: -.15px; }
.cells .c5 { background: #5b9bd5; color: #fff; } .cells .c6 { background: #70ad47; color: #fff; }
.cells .picked { outline: 2px solid #666; outline-offset: 1px; }
.gscroll { width: 14px; display: grid; grid-template-rows: 20px 20px 20px; gap: 1px; background: #888; }
.gscroll i { background: #4c4c4c; display: grid; place-items: center; }
.flip { transform: scaleY(-1); }
.g-cells { padding-left: 7px; }
.g-cells .big { width: 44px; padding-top: 6px; }
.g-cells .big > span { margin: 8px 0 4px; }
.g-cells .fmt { padding-top: 1px; }
.edit-grid { display: flex; padding-left: 14px; }
.edit-list { width: 94px; display: grid; grid-template-rows: 24px 27px 25px; }
.edit-list div { gap: 4px; letter-spacing: -.4px; } .sum-chev { margin-left: 7px; }
.edit-grid .big { width: 46px; padding-top: 4px; } .edit-grid .big > svg { margin-bottom: 3px; }
.ana { padding-top: 2px; } .ana > svg { margin-bottom: 3px; }
.collapse { margin: 81px 0 0 51px; }

/* formula bar */
.formula { flex: none; margin-top: 8px; height: 26px; padding: 0 8px; display: flex; align-items: center; }
.formula > div { height: 26px; background: #4a4a4a; border: 1px solid #7d7d7d; border-radius: 4px; display: flex; align-items: center; justify-content: space-between; }
.namebox { width: 102px; padding: 0 5px 0 6px; font-size: 12.500px; }
.fdots { margin: 0 8px 0 9px; }
.formula .fx { width: 74px; padding: 0 5px 0 6px; }
.fx em { font: italic 19px/20px "Liberation Serif", serif; color: #ddd; letter-spacing: 0; }
.fval { flex: 1; margin-left: 4px; padding: 0 4px 0 11px; font-size: 12.500px; }

/* worksheet */
.sheet-area { flex: none; height: 764px; margin-top: 6px; display: flex; }
.sheet { width: 1899px; height: 765px; overflow: hidden; border-bottom: 1px solid #8a8a8a; border-right: 1px solid #555; background: #fff; font-family: "Liberation Sans", Arial, sans-serif; letter-spacing: 0; }
.r { display: grid; grid-template-columns: 27px repeat(13, 94px) repeat(16, 42px); height: 13px; width: 1921px; }
.head { height: 14px; background: #2d2d2d; font-size: 10px; line-height: 14px; color: #fff; text-align: center; border-bottom: 1px solid #999; }
.head div { border-right: 1px solid #8f8f8f; }
.head .on { background: #666; border-bottom: 2px solid #217346; height: 14px; }
.corner-cell { background: linear-gradient(135deg, #0000 50%, #bbb 50%) no-repeat 18px 4px / 6px 6px; }
.rn { background: #2d2d2d; border-bottom: 1px solid #999; border-right: 1px solid #999; font-size: 9.500px; line-height: 13px; text-align: center; padding-right: 1px; letter-spacing: -.2px; overflow: hidden; }
.rn.on { background: #666; border-right: 2px solid #217346; }
.c { position: relative; height: 13px; border-right: 1px solid #dadada; border-bottom: 1px solid #dadada; color: #000; font-size: 10px; line-height: 14px; padding-left: 3px; overflow: hidden; white-space: nowrap; letter-spacing: .1px; }
.col-B { letter-spacing: .2px; }
.col-C, .col-D { padding-left: 6px; }
.c.h { font-weight: 700; font-size: 10.500px; letter-spacing: .4px; line-height: 13px; }
.col-F.h, .col-G.h, .col-H.h, .col-I.h { padding-left: 6px; } .col-J.h { padding-left: 9px; }
.col-A.h { background: #4472c4; color: #fff; }
.filter { position: absolute; right: 0; top: 0; width: 13px; height: 12px; background: linear-gradient(#666, #666) 4px 4px / 5px 1px no-repeat, conic-gradient(from -45deg at 50% 100%, #666 90deg, #0000 0) 4px 5px / 5px 3px no-repeat, #eee; border: 1px solid #aaa; }
.blue { border-bottom-color: #4472c4; border-right-color: #4472c4; }
.corner { background: linear-gradient(135deg, #0000 50%, #4472c4 50%) no-repeat right bottom / 3px 3px; }
.amber { background: #ffeb9c; border-color: #ffeb9c; color: #9c5700; }
.green { background: #c6efce; border-color: #c6efce; }
.blank { border-color: #fff; }
.col-E { display: flex; justify-content: flex-end; padding-right: 1px; }
.col-E.h { justify-content: flex-start; }
.col-E span { position: relative; letter-spacing: .1px; }
.bar { position: absolute; left: 1px; top: 1px; height: 9px; border: 1px solid #63c384; background: linear-gradient(90deg, #63c384, #e6f5ea); }
.m { display: flex; justify-content: space-between; padding: 0 2px 0 5px; }
.m i { font: 9.500px/13px "DejaVu Sans", sans-serif; }
.m span { letter-spacing: .45px; }
.m .dash { margin-right: 16px; transform: scaleX(1.400); }
.selected { overflow: visible; box-shadow: inset 0 0 0 1px #217346, 0 0 0 1px #217346; z-index: 1; }
.selected::after { content: ""; position: absolute; right: -3px; bottom: -3px; width: 5px; height: 5px; background: #217346; border: solid #fff; border-width: 1px 0 0 1px; }
.vscroll { width: 14px; margin: 3px 0 0 3px; padding: 2px 0 3px; border-radius: 7px; background: #3a3a3a; display: flex; flex-direction: column; align-items: center; gap: 1px; }
.vscroll i { width: 9px; height: 719px; border-radius: 4px; background: #c8c8c8; margin-bottom: auto; }

/* sheet tabs */
.sheetbar { flex: none; height: 28px; display: flex; align-items: flex-start; }
.nav { margin: 1px 0 0 16px; width: 84px; height: 27px; background: #696969; display: flex; align-items: center; gap: 23px; padding-left: 12px; }
.tab { width: 65px; height: 25px; background: #fff; border-bottom: 2px solid #217346; color: #217346; font-weight: 700; font-size: 12.500px; line-height: 27px; text-align: center; letter-spacing: -.45px; }
.add { margin-top: 1px; width: 56px; height: 27px; background: #696969; display: flex; align-items: center; padding-left: 32px; }
.hdots { margin: 9px 0 0 930px; }
.hscroll { margin: 5px 0 0 13px; width: 734px; height: 17px; border-radius: 8px; background: #3a3a3a; display: flex; align-items: center; padding: 0 4px; justify-content: space-between; }
.hscroll i { width: 683px; height: 9px; border-radius: 4px; background: #c8c8c8; margin: 0 auto 0 5px; }
.status { flex: none; height: 23px; background: #383838; display: flex; align-items: center; padding: 0 0 1px 8px; font-size: 11px; letter-spacing: 0; }
.status > svg { margin: 0 4px 0 17px; }
.views { display: flex; margin-left: auto; }
.views span { width: 40px; height: 22px; display: grid; place-items: center; }
.views .on { background: #484848; }
.status .zoomer { margin: 0 13px 0 7px; }
.pctz { width: 35px; letter-spacing: -.3px; }

/* taskbar */
.taskbar { flex: none; height: 47px; position: relative; display: flex; align-items: center; }
.wall { position: absolute; inset: 0; }
.taskbar > div { position: relative; display: flex; align-items: center; padding-bottom: 1px; }
.taskbar .weather { margin-left: 20px; width: 699px; gap: 6px; padding-bottom: 0; }
.weather div { display: flex; flex-direction: column; }
.weather b { font-weight: 400; } .weather span { color: #ccc; letter-spacing: -.15px; }
.apps > span { width: 44px; height: 47px; display: grid; place-items: center; position: relative; }
.run::after { content: ""; position: absolute; left: 19px; bottom: 5px; width: 6px; height: 3px; border-radius: 2px; background: #999; }
.cur::before { content: ""; position: absolute; inset: 3px 2px 4px 3px; border-radius: 4px; background: #fff1; border: 1px solid #fff1; }
.cur::after { left: 14px; width: 16px; background: #4cc2ff; }
.tray { margin-left: 463px; gap: 8px; }
.tray-up { margin-right: 5px; }
.lang, .clock { display: flex; flex-direction: column; text-align: center; }
.lang { width: 27px; margin-right: 8px; }
.clock { text-align: right; width: 66px; margin-left: -2px; }
.badge { width: 16px; height: 16px; margin-left: 3px; border-radius: 50%; background: #4cc2ff; color: #123; font-size: 10px; line-height: 16px; text-align: center; }

/* table style menu */
.popup { position: absolute; left: 1016px; top: 158px; width: 504px; height: 670px; background: #f3f2f1; border: 1px solid #b5b3b1; border-radius: 5px; color: #262626; box-shadow: 0 5px 14px #0005; padding-top: 6px; z-index: 5; }
.popup h3 { margin: 0 0 5px 15px; font: 700 12px/18px "Open Sans", sans-serif; letter-spacing: -.4px; }
.swatches { display: grid; grid-template-columns: repeat(7, 69px); grid-auto-rows: 54px; padding-left: 1px; }
.sw { display: grid; place-items: center; }
.hover { background: #c8c6c4; }
.popup hr { border: 0; height: 1px; background: #d2d0ce; margin: 9px 18px 6px 1px; }
.popup hr.wide { margin: 9px 2px 0 1px; }
.item { display: flex; align-items: center; gap: 8px; height: 28px; padding-left: 13px; color: #444; margin-top: 1px; letter-spacing: -.3px; }
.item + .item { margin-top: 0; }
.grip { display: flex; gap: 3px; justify-content: center; margin-top: 3px; }
.grip i { width: 2px; height: 2px; background: #bbb; }
```
